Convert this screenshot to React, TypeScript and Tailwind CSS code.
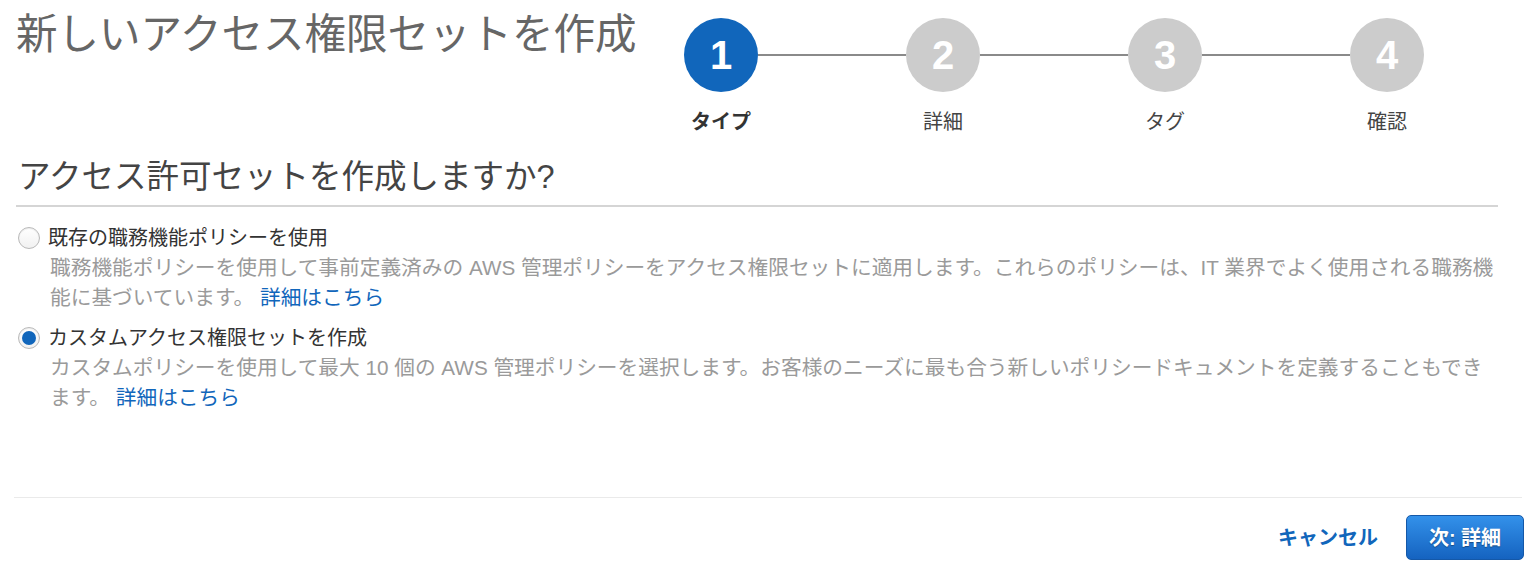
import React from "react"

const steps = [
  { n: "1", label: "タイプ", active: true },
  { n: "2", label: "詳細", active: false },
  { n: "3", label: "タグ", active: false },
  { n: "4", label: "確認", active: false },
]

function Radio({ checked }: { checked: boolean }) {
  return (
    <span className="flex h-[22px] w-[22px] shrink-0 items-center justify-center rounded-full border border-[#b9b9b9] bg-gradient-to-b from-white to-[#f1f1f1] shadow-[inset_0_1px_1px_rgba(0,0,0,0.08)]">
      {checked && <span className="h-[14px] w-[14px] rounded-full bg-[#1166bb]" />}
    </span>
  )
}

function Option({
  checked,
  title,
  line1,
  line2,
}: {
  checked: boolean
  title: string
  line1: string
  line2: string
}) {
  return (
    <div>
      <div className="flex items-center gap-[8px]">
        <Radio checked={checked} />
        <span className="text-[20px] leading-[30px] text-[#333]">{title}</span>
      </div>
      <p className="ml-[32px] whitespace-nowrap text-[20.7px] leading-[30px] text-[#9a9a9a]">
        {line1}
        <br />
        {line2} <a className="text-[#1166bb]">詳細はこちら</a>
      </p>
    </div>
  )
}

export default function App() {
  return (
    <div
      className="h-[569px] w-[1536px] overflow-hidden bg-white"
      style={{ fontFamily: '"Liberation Sans", "Noto Sans CJK JP", sans-serif' }}
    >
      {/* header */}
      <div className="flex items-start pl-[16px]">
        <h1 className="whitespace-nowrap pt-[9px] text-[41.5px] leading-[52px] text-[#666]">
          新しいアクセス権限セットを作成
        </h1>
        <div className="ml-auto mr-[112px] flex shrink-0 items-start pt-[18px]">
          {steps.map((s, i) => (
            <React.Fragment key={s.n}>
              {i > 0 && <div className="mt-[36px] h-[2px] w-[148px] bg-[#8a8a8a]" />}
              <div className="flex w-[74px] flex-col items-center">
                <div
                  className={
                    s.active
                      ? "flex h-[74px] w-[74px] items-center justify-center rounded-full bg-[#1166bb] text-[40px] font-bold text-white"
                      : "flex h-[74px] w-[74px] items-center justify-center rounded-full bg-[#cccccc] text-[40px] font-bold text-white"
                  }
                >
                  {s.n}
                </div>
                <div
                  className={
                    s.active
                      ? "mt-[16px] whitespace-nowrap text-[20px] font-bold leading-[28px] text-[#333]"
                      : "mt-[16px] whitespace-nowrap text-[20px] leading-[28px] text-[#444]"
                  }
                >
                  {s.label}
                </div>
              </div>
            </React.Fragment>
          ))}
        </div>
      </div>

      {/* section */}
      <div className="mx-[16px] w-[1482px]">
        <h2 className="mt-[19px] pl-[2px] text-[32.5px] leading-[44px] text-[#444]">
          アクセス許可セットを作成しますか?
        </h2>
        <div className="mt-[6px] h-[2px] bg-[#d5d5d5]" />
        <div className="mt-[16px] flex flex-col gap-[10px] pl-[2px]">
          <Option
            checked={false}
            title="既存の職務機能ポリシーを使用"
            line1="職務機能ポリシーを使用して事前定義済みの AWS 管理ポリシーをアクセス権限セットに適用します。これらのポリシーは、IT 業界でよく使用される職務機"
            line2="能に基づいています。"
          />
          <Option
            checked={true}
            title="カスタムアクセス権限セットを作成"
            line1="カスタムポリシーを使用して最大 10 個の AWS 管理ポリシーを選択します。お客様のニーズに最も合う新しいポリシードキュメントを定義することもでき"
            line2="ます。"
          />
        </div>
      </div>

      {/* footer */}
      <div className="mx-[14px] mt-[84px] h-[1px] bg-[#eaeaea]" />
      <div className="flex items-center justify-end gap-[28px] pr-[12px] pt-[17px]">
        <a className="text-[20px] font-bold text-[#1166bb]">キャンセル</a>
        <button className="h-[45px] w-[118px] rounded-[5px] border border-[#1458a8] bg-gradient-to-b from-[#3391ea] to-[#1563c0] text-[20px] font-bold text-white [text-shadow:0_1px_1px_rgba(0,0,0,0.35)]">
          次: 詳細
        </button>
      </div>
    </div>
  )
}
